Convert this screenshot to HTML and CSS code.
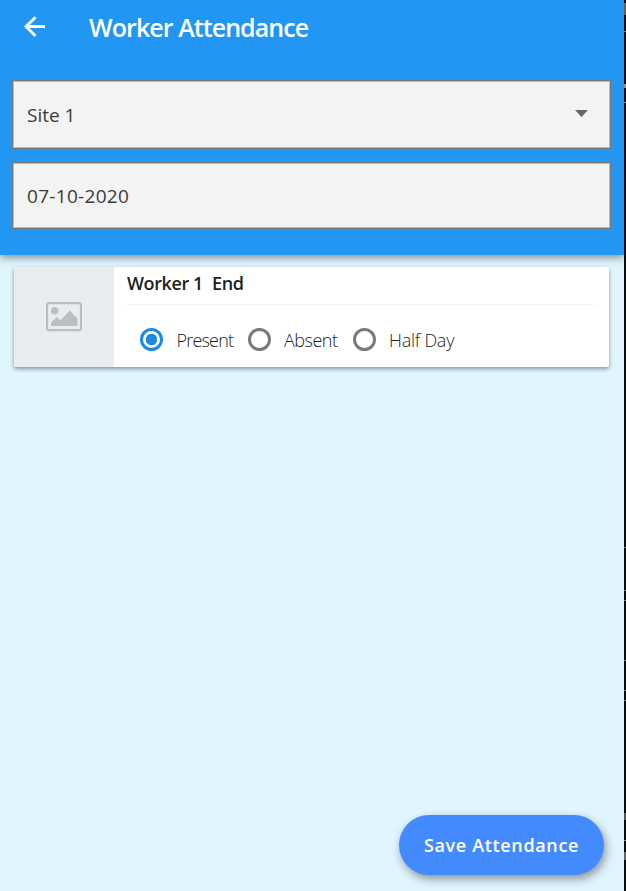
FILE: index.html
```html
<!DOCTYPE html>
<html lang="en">
<head>
<meta charset="utf-8">
<title>Worker Attendance</title>
<link rel="stylesheet" href="styles.css">
</head>
<body>
<div class="app">
  <header class="header">
    <div class="toolbar">
      <svg class="back" viewBox="0 0 22 22"><path d="M22 10.500H3M12.500 1.200 3 10.500l9.500 9.500" fill="none" stroke="#fff" stroke-width="2.800"/></svg>
      <h1 class="title"><span>Worker Attendance</span></h1>
    </div>
    <div class="field field-site"><span class="site">Site 1</span><svg class="caret" viewBox="0 0 13 7"><path d="M0 0h13L6.500 7z" fill="#666"/></svg></div>
    <div class="field field-date"><span class="date">07-10-2020</span></div>
  </header>
  <main class="list">
    <article class="card">
      <div class="thumb">
        <svg class="picture" viewBox="0 0 36 30"><rect x="1" y="1.200" width="34" height="27" rx="2" fill="none" stroke="#babfc1" stroke-width="2.200"/><circle cx="8.700" cy="8.700" r="3.800" fill="#babfc1"/><path d="M5 24v-3.500l5.800-5.500 3.700 3.500L23.700 8.500 31.500 16.500V24z" fill="#babfc1"/></svg>
      </div>
      <div class="details">
        <div class="name"><span class="first">Worker 1</span><span class="last">End</span></div>
        <div class="options">
          <div class="option"><i class="radio checked"></i><span class="present">Present</span></div>
          <div class="option"><i class="radio"></i><span class="absent">Absent</span></div>
          <div class="option"><i class="radio"></i><span class="half">Half Day</span></div>
        </div>
      </div>
    </article>
  </main>
  <button class="save"><span>Save Attendance</span></button>
</div>
<div class="edge"></div>
</body>
</html>
```
FILE: styles.css
```css
* { box-sizing: border-box; }
body { margin: 0; display: flex; height: 891px; overflow: hidden; background: #0c0c0c; font-family: "Open Sans", "Noto Sans", sans-serif; }
.app { width: 624px; height: 891px; display: flex; flex-direction: column; background: #e1f5fe; }
.edge { width: 2px; background: linear-gradient(#705b43, #705b43) 0 3px / 2px 12px no-repeat, linear-gradient(#777, #777) 0 31px / 2px 1px no-repeat, linear-gradient(#a78670, #a78670) 0 84px / 2px 4px no-repeat, linear-gradient(#888, #888) 0 102px / 2px 1px no-repeat, linear-gradient(#777, #777) 0 547px / 2px 1px no-repeat, linear-gradient(#777, #777) 0 590px / 2px 1px no-repeat, linear-gradient(#777, #777) 0 600px / 2px 1px no-repeat, linear-gradient(#777, #777) 0 660px / 2px 1px no-repeat, linear-gradient(#777, #777) 0 690px / 2px 1px no-repeat, linear-gradient(#777, #777) 0 700px / 2px 1px no-repeat, linear-gradient(#555, #555) 0 813px / 2px 7px no-repeat, linear-gradient(#888, #888) 0 840px / 2px 1px no-repeat, linear-gradient(#666, #666) 0 852px / 2px 8px no-repeat, #0c0c0c; }
.header { height: 255px; padding: 0 13px 0 12px; background: #2196f3; box-shadow: 0 3px 8px rgba(0,0,0,.4); }
.toolbar { height: 80px; display: flex; align-items: flex-start; padding: 16px 0 0 11px; }
.back { width: 22px; height: 22px; }
.title { margin: -6px 0 0 44px; color: #fff; font-size: 25px; line-height: 34px; font-weight: 650; letter-spacing: -.930px; white-space: nowrap; }
.field { display: flex; align-items: center; justify-content: space-between; padding: 0 22px 0 14px; border: 1px solid #777; box-shadow: inset 0 0 0 1px #bbb; background: #f3f3f3; color: #3b3b3b; font-size: 19px; line-height: 26px; }
.field-site { height: 69px; }
.field-date { height: 67px; margin-top: 13px; }
.date { letter-spacing: .3px; }
.caret { width: 13px; height: 7px; margin-top: -2px; }
.list { padding: 12px 15px 0 14px; }
.card { height: 100px; display: flex; background: #fff; border-radius: 2px; overflow: hidden; box-shadow: 0 2px 4px rgba(0,0,0,.4); }
.thumb { width: 100px; display: flex; align-items: center; justify-content: center; background: #e9edf0; }
.picture { width: 36px; height: 30px; }
.details { flex: 1; padding: 0 13px 0 12px; }
.name { height: 38px; display: flex; gap: 9px; padding: 4px 0 0 1px; border-bottom: 1px solid #f6f6f6; color: #212121; font-size: 18px; line-height: 25px; font-weight: 600; letter-spacing: -.4px; white-space: nowrap; }
.options { display: flex; padding: 22px 0 0 14px; }
.option { display: flex; align-items: center; height: 24px; color: #222; font-size: 18px; font-weight: 330; white-space: nowrap; }
.option span { padding-top: 2px; }
.option:nth-child(1) { width: 107.500px; }
.option:nth-child(2) { width: 105px; }
.option:nth-child(n+2) .radio { margin-right: 13.500px; }
.present { letter-spacing: -.800px; }
.absent { letter-spacing: -.500px; }
.half { letter-spacing: -.250px; }
.radio { flex: none; width: 23px; height: 23px; margin-right: 13.500px; border: 3px solid #7a7a7a; border-radius: 50%; }
.checked { border-color: #1e88e5; background: radial-gradient(circle, #1e88e5 5.500px, transparent 6px); }
.save { width: 205px; height: 60px; margin: auto 20px 16px auto; border: 0; border-radius: 30px; background: #448aff; color: #fff; font: 600 18px/26px "Open Sans", sans-serif; letter-spacing: .650px; box-shadow: 2px 4px 10px rgba(0,0,0,.4); white-space: nowrap; }
```
